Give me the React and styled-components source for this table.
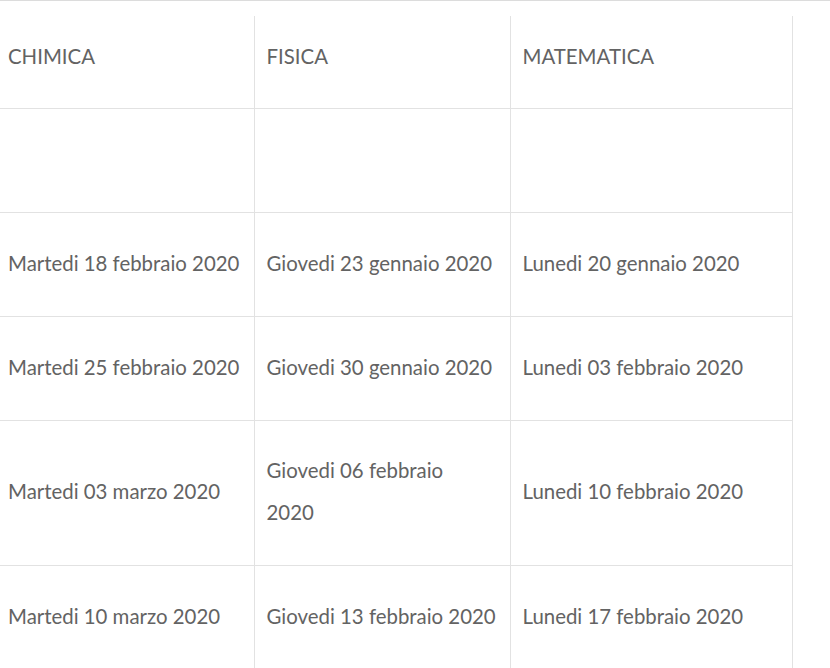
import React from 'react';
import styled, { createGlobalStyle } from 'styled-components';

const GlobalStyle = createGlobalStyle`
  html, body {
    margin: 0;
    padding: 0;
    background: #fff;
    overflow: hidden;
  }
  body {
    font-family: 'Lato', 'Open Sans', sans-serif;
  }
`;

const Page = styled.div`
  border-top: 1px solid #dcdcdc;
  width: 830px;
  height: 667px;
`;

const Table = styled.table`
  margin-top: 15px;
  width: 792px;
  border-collapse: collapse;
  table-layout: fixed;
  color: #636363;
  font-size: 20.4px;
  line-height: 42px;
`;

const Col = styled.col`
  width: ${({ $w }) => $w}px;
`;

const HeadCell = styled.th`
  text-align: left;
  font-weight: 400;
  padding: 19px 12px 31px;
  border-right: 1px solid #e2e2e2;
  border-bottom: 1px solid #e2e2e2;
  &:first-child {
    padding-left: 8px;
  }
`;

const Cell = styled.td`
  text-align: left;
  vertical-align: middle;
  padding: 28px 12px 32px;
  height: ${({ $h }) => $h}px;
  border-right: 1px solid #e2e2e2;
  border-bottom: 1px solid #e2e2e2;
  box-sizing: border-box;
  white-space: nowrap;
  &:first-child {
    padding-left: 8px;
  }
`;

const subjects = ['CHIMICA', 'FISICA', 'MATEMATICA'];

// each cell is a list of lines, as the column wraps them in the page
const rows = [
  { h: 104, cells: [[''], [''], ['']] },
  {
    h: 104,
    cells: [['Martedi 18 febbraio 2020'], ['Giovedi 23 gennaio 2020'], ['Lunedi 20 gennaio 2020']],
  },
  {
    h: 104,
    cells: [['Martedi 25 febbraio 2020'], ['Giovedi 30 gennaio 2020'], ['Lunedi 03 febbraio 2020']],
  },
  {
    h: 145,
    cells: [['Martedi 03 marzo 2020'], ['Giovedi 06 febbraio', '2020'], ['Lunedi 10 febbraio 2020']],
  },
  {
    h: 104,
    cells: [['Martedi 10 marzo 2020'], ['Giovedi 13 febbraio 2020'], ['Lunedi 17 febbraio 2020']],
  },
];

export default function App() {
  return (
    <>
      <GlobalStyle />
      <Page>
        <Table>
          <colgroup>
            <Col $w={254} />
            <Col $w={256} />
            <Col $w={282} />
          </colgroup>
          <thead>
            <tr>
              {subjects.map((s) => (
                <HeadCell key={s}>{s}</HeadCell>
              ))}
            </tr>
          </thead>
          <tbody>
            {rows.map((r, i) => (
              <tr key={i}>
                {r.cells.map((lines, j) => (
                  <Cell key={j} $h={r.h}>
                    {lines.map((l, k) => (
                      <React.Fragment key={k}>
                        {k > 0 && <br />}
                        {l}
                      </React.Fragment>
                    ))}
                  </Cell>
                ))}
              </tr>
            ))}
          </tbody>
        </Table>
      </Page>
    </>
  );
}
